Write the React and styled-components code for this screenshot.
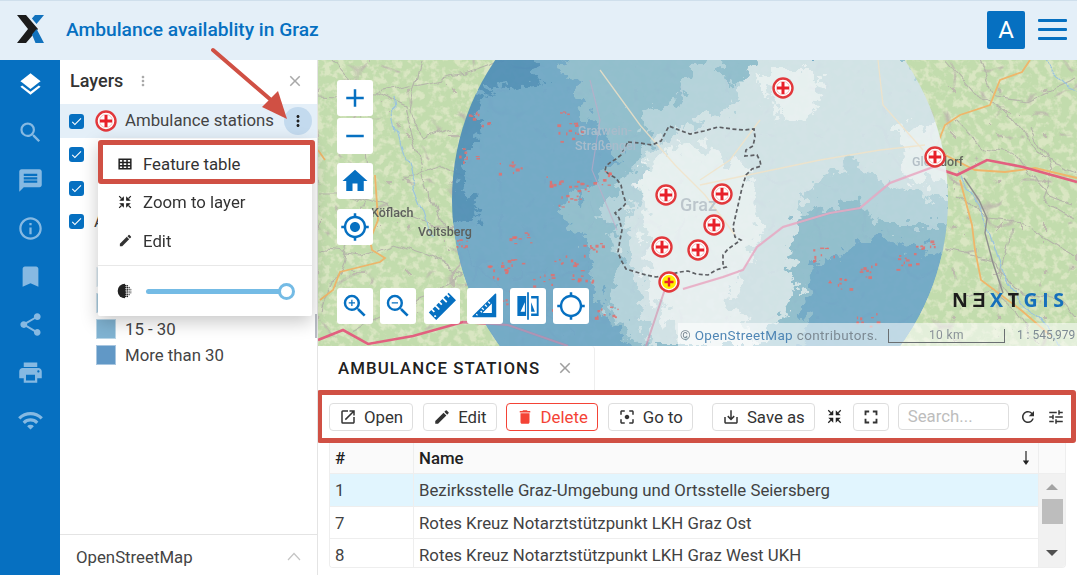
import React, { useMemo } from 'react';
import styled, { createGlobalStyle } from 'styled-components';
import {
  MdLayers, MdSearch, MdMessage, MdInfoOutline, MdBookmark, MdShare, MdPrint, MdWifi,
  MdClose, MdMoreVert, MdEdit, MdCheck, MdOpenInNew, MdDelete,
  MdFilterCenterFocus, MdSaveAlt, MdFullscreen, MdRefresh, MdTune,
  MdAdd, MdRemove, MdHome, MdMyLocation, MdZoomIn, MdZoomOut, MdLocationSearching,
} from 'react-icons/md';

const BLUE = '#0670c1';
const RED = '#d05044';

const GlobalStyle = createGlobalStyle`
  html, body { margin: 0; padding: 0; height: 100%; overflow: hidden; }
  body { font-family: Roboto, "Liberation Sans", sans-serif; color: #212121; background: #fff; }
  * { box-sizing: border-box; }
`;

const Page = styled.div`
  position: relative;
  width: 1077px;
  height: 575px;
  display: grid;
  grid-template-rows: 60px 1fr;
  overflow: hidden;
`;

const Header = styled.header`
  display: flex;
  align-items: center;
  padding: 0 10px 2px 17px;
  background: #e4eff8;
  border-top: 1px solid #cfdfec;
`;

const Title = styled.div`
  margin-left: 22px;
  font-size: 19.2px;
  font-weight: 500;
  color: ${BLUE};
  flex: 1;
`;

const Avatar = styled.div`
  width: 38px;
  height: 38px;
  background: ${BLUE};
  border-radius: 2px;
  color: #fff;
  font-size: 24px;
  display: flex;
  align-items: center;
  justify-content: center;
`;

const Burger = styled.div`
  width: 29px;
  margin-left: 13px;
  display: flex;
  flex-direction: column;
  gap: 6px;
  span { display: block; height: 3px; background: ${BLUE}; border-radius: 1px; }
`;

const Body = styled.div`
  display: flex;
  min-height: 0;
`;

const Sidebar = styled.nav`
  width: 60px;
  background: ${BLUE};
  display: flex;
  flex-direction: column;
`;

const SideItem = styled.div`
  height: 48px;
  display: flex;
  align-items: center;
  justify-content: center;
  color: ${p => (p.$active ? '#fff' : '#86b9e2')};
`;

const Panel = styled.aside`
  position: relative;
  width: 258px;
  border-right: 1px solid #e4e4e4;
  display: flex;
  flex-direction: column;
  background: #fff;
`;

const PanelHead = styled.div`
  height: 44px;
  display: flex;
  align-items: center;
  padding: 0 13px 3px 10px;
  font-size: 18px;
  font-weight: 500;
  color: #333;
  span { flex: 1; display: flex; align-items: center; gap: 12px; }
  svg { color: #a8a8a8; }
`;

const Tree = styled.div`
  flex: 1;
`;

const LayerRow = styled.div`
  height: ${p => (p.$first ? '34px' : '33.5px')};
  display: flex;
  align-items: center;
  padding: 0 5px 0 9px;
  font-size: 16.8px;
  color: #444;
  background: ${p => (p.$active ? '#e4eff8' : 'transparent')};
`;

const Check = styled.div`
  width: 15px;
  height: 15px;
  flex: none;
  border-radius: 3px;
  background: ${BLUE};
  color: #fff;
  display: flex;
  align-items: center;
  justify-content: center;
  margin-right: ${p => p.$gap || 11}px;
`;

const LayerName = styled.div`
  flex: 1;
  margin-left: ${p => p.$indent || 0}px;
  padding-bottom: 2px;
`;

const RoundBtn = styled.div`
  width: 28px;
  height: 28px;
  border-radius: 50%;
  background: #c3daee;
  display: flex;
  align-items: center;
  justify-content: center;
  color: #212121;
`;

const Legend = styled.div`
  padding: 28.5px 0 0 36px;
  display: flex;
  flex-direction: column;
  gap: 6px;
`;

const LegendRow = styled.div`
  display: flex;
  align-items: center;
  gap: 9px;
  font-size: 16.8px;
  color: #444;
  height: 20px;
`;

const Swatch = styled.div`
  width: 20px;
  height: 20px;
  background: ${p => p.$color};
  border: 1px solid rgba(255, 255, 255, 0.45);
`;

const PanelFoot = styled.div`
  height: 41px;
  border-top: 1px solid #e4e4e4;
  display: flex;
  align-items: center;
  justify-content: space-between;
  padding: 3px 16px 0 16px;
  font-size: 16.8px;
  color: #444;
`;

const ScrollSliver = styled.div`
  position: absolute;
  right: 0;
  top: 254px;
  width: 2px;
  height: 24px;
  background: #b8bcc4;
`;

const Menu = styled.div`
  position: absolute;
  left: 38px;
  top: 79px;
  width: 214px;
  height: 177px;
  background: #fff;
  box-shadow: 0 6px 18px rgba(0, 0, 0, 0.22);
  border-radius: 2px;
  z-index: 5;
`;

const MenuItem = styled.div`
  height: ${p => (p.$highlight ? '44px' : '39px')};
  display: flex;
  align-items: center;
  gap: 11px;
  padding-left: ${p => (p.$highlight ? '15px' : '20px')};
  font-size: 16.8px;
  color: #333;
  ${p => p.$highlight && `
    margin: 1px -3px -2px 0;
    padding-top: 3px;
    border: 5px solid ${RED};
    border-radius: 3px;
    background: #fff;
  `}
  svg.pen { margin-right: -1px; }
`;

const MenuDivider = styled.div`
  height: 1px;
  background: #e8e8e8;
  margin-top: 5px;
`;

const MenuSlider = styled.div`
  height: 50px;
  display: flex;
  align-items: center;
  gap: 13px;
  padding: 0 25px 0 19px;
`;

const Track = styled.div`
  position: relative;
  flex: 1;
  height: 5px;
  border-radius: 3px;
  background: #74bbe5;
`;

const Thumb = styled.div`
  position: absolute;
  right: -8px;
  top: -6px;
  width: 17px;
  height: 17px;
  border-radius: 50%;
  background: #fff;
  border: 3px solid #74bbe5;
`;

const Main = styled.main`
  flex: 1;
  min-width: 0;
  display: flex;
  flex-direction: column;
`;

const MapBox = styled.div`
  position: relative;
  height: 286px;
  overflow: hidden;
  background: #c8dfb4;
  svg.basemap { display: block; }
`;

const MapTools = styled.div`
  position: absolute;
  left: 19px;
  top: 20px;
  display: flex;
  flex-direction: column;
  gap: 2px;
`;

const MapBtn = styled.div`
  width: 36px;
  height: 36px;
  background: #fff;
  border-radius: 3px;
  color: ${BLUE};
  display: flex;
  align-items: center;
  justify-content: center;
  margin-top: ${p => p.$gap || 0}px;
  margin-left: ${p => p.$shift || 0}px;
`;

const MapBottomTools = styled.div`
  position: absolute;
  left: 19px;
  bottom: 22px;
  display: flex;
  gap: 7px;
`;

const Logo = styled.div`
  position: absolute;
  left: 634px;
  top: 230px;
  font-family: "Open Sans", sans-serif;
  font-size: 19.5px;
  line-height: 20px;
  font-weight: 700;
  letter-spacing: 4.6px;
  color: #1c1c1c;
  white-space: nowrap;
  span { color: #1670bb; }
`;

const Attribution = styled.div`
  position: absolute;
  right: 0;
  bottom: 0;
  left: 360px;
  height: 23px;
  background: rgba(255, 255, 255, 0.55);
  display: flex;
  align-items: center;
  font-size: 13.5px;
  color: #7d8a94;
  padding-left: 2px;
  white-space: nowrap;
  letter-spacing: 0.35px;
  b { font-weight: 400; color: #4f86b5; }
  em { font-style: normal; font-size: 12px; letter-spacing: 0; }
`;

const ScaleBar = styled.div`
  width: 117px;
  height: 14px;
  margin: 3px 12px 0 10px;
  border: 1px solid #6a6f72;
  border-top: none;
  font-size: 12px;
  line-height: 13px;
  text-align: center;
  color: #8a9299;
`;

const Bottom = styled.section`
  flex: 1;
  min-height: 0;
  background: #fff;
`;

const TabBar = styled.div`
  height: 44px;
  display: flex;
`;

const Tab = styled.div`
  width: 277px;
  border-right: 1px solid #eee;
  border-top-right-radius: 4px;
  display: flex;
  align-items: center;
  padding-left: 20px;
  gap: 16px;
  font-size: 16.8px;
  font-weight: 500;
  letter-spacing: 1.1px;
  color: #212121;
  svg { color: #9e9e9e; }
`;

const Toolbar = styled.div`
  height: 53px;
  margin-left: -1px;
  margin-right: 1px;
  border: 5px solid ${RED};
  border-radius: 3px;
  display: flex;
  align-items: center;
  padding-left: 7px;
`;

const ToolBtn = styled.div`
  height: 28px;
  display: flex;
  align-items: center;
  gap: 7px;
  padding: 0 ${p => (p.$square ? 6 : 9)}px;
  margin-right: ${p => p.$mr ?? 10}px;
  border: 1px solid ${p => (p.$danger ? '#f44336' : '#dedede')};
  border-radius: 4px;
  background: #fff;
  color: ${p => (p.$danger ? '#f44336' : '#333')};
  font-size: 16.8px;
  flex: none;
`;

const PlainIcon = styled.div`
  width: ${p => p.$w || 28}px;
  margin-right: ${p => p.$mr || 0}px;
  display: flex;
  justify-content: center;
  color: #333;
  flex: none;
`;

const SearchBox = styled.div`
  width: 111px;
  height: 27px;
  border: 1px solid #dedede;
  border-radius: 4px;
  margin: 0 5px 0 0;
  padding-left: 9px;
  font-size: 16.8px;
  line-height: 25px;
  color: #bdbdbd;
  flex: none;
`;

const Table = styled.div`
  margin: 0 11px;
  height: 125px;
  border: 1px solid #eee;
  border-top: none;
  border-radius: 0 0 4px 4px;
  display: flex;
  overflow: hidden;
`;

const Rows = styled.div`
  flex: 1;
  min-width: 0;
`;

const Row = styled.div`
  display: grid;
  grid-template-columns: 83px 1fr;
  height: ${p => p.$h}px;
  background: ${p => (p.$bg ? p.$bg : '#fff')};
  border-bottom: 1px solid #eee;
  font-size: 16.8px;
  font-weight: ${p => (p.$head ? 500 : 400)};
  color: ${p => (p.$head ? '#212121' : '#424242')};
`;

const Cell = styled.div`
  display: flex;
  align-items: center;
  justify-content: space-between;
  padding: 0 5px;
  & + & { border-left: 1px solid #eee; }
`;

const ScrollCol = styled.div`
  width: 27px;
  flex: none;
  display: flex;
  flex-direction: column;
  border-left: 1px solid #eee;
`;

const ScrollHead = styled.div`
  height: 31px;
  flex: none;
  background: #fafafa;
  border-bottom: 1px solid #eee;
`;

const ScrollTrack = styled.div`
  flex: 1;
  background: #f1f1f1;
  display: flex;
  flex-direction: column;
  align-items: center;
  padding-top: 10px;
`;

const ArrowUp = styled.div`
  width: 0;
  height: 0;
  border-left: 6px solid transparent;
  border-right: 6px solid transparent;
  border-bottom: 6px solid ${p => p.$color};
`;

const ArrowDown = styled.div`
  width: 0;
  height: 0;
  margin-top: 26px;
  border-left: 6px solid transparent;
  border-right: 6px solid transparent;
  border-top: 6px solid #505050;
`;

const ScrollThumb = styled.div`
  width: 21px;
  height: 25px;
  margin-top: 9px;
  background: #bdbdbd;
`;

const Annotation = styled.svg`
  position: absolute;
  left: 0;
  top: 0;
  z-index: 10;
  pointer-events: none;
`;

const LogoMark = () => (
  <svg width="27" height="29" viewBox="17 15 27 29">
    <path d="M17 15h9l12 14-12 14h-9l11-14z" fill="#1c1c1c" />
    <path d="M35 15h9l-7.500 9-4.600-5.400zM32 34.400l4.600-5.400L44 43h-8.500z" fill="#1272bd" />
  </svg>
);

const TableIcon = () => (
  <svg width="14" height="14" viewBox="0 0 24 24" fill="none" stroke="#222" strokeWidth="2.600">
    <path d="M2 4h20v16H2zM2 9.500h20M2 15h20M8.500 4v16M15.500 4v16" />
  </svg>
);

const ShrinkIcon = ({ size = 14 }) => (
  <svg width={size} height={size} viewBox="0 0 24 24" fill="#222" stroke="#222" strokeWidth="2">
    <path d="M9 9H4.500L9 4.500zM15 9h4.500L15 4.500zM9 15H4.500L9 19.500zM15 15h4.500L15 19.500z" />
    <path d="M2 2l4 4M22 2l-4 4M2 22l4-4M22 22l-4-4" fill="none" />
  </svg>
);

const OpacityIcon = () => {
  const dots = [];
  for (let x = 0; x < 4; x++) {
    for (let y = 0; y < 7; y++) {
      const dx = 13 + x * 2.600;
      const dy = 4 + y * 2.700;
      if ((dx - 12) ** 2 + (dy - 12) ** 2 < 100) dots.push(<circle key={`${x}-${y}`} cx={dx} cy={dy} r={1.250 - x * 0.140} fill="#222" />);
    }
  }
  return (
    <svg width="16" height="16" viewBox="0 0 24 24">
      <path d="M12 1a11 11 0 0 0 0 22z" fill="#222" />
      {dots}
    </svg>
  );
};

const SortArrow = () => (
  <svg width="14" height="16" viewBox="0 0 14 16" fill="#222">
    <path d="M6.400 1h1.200v11h-1.200z" />
    <path d="M3.800 10.500h6.400L7 15z" />
  </svg>
);

const Chevron = () => (
  <svg width="14" height="9" viewBox="0 0 14 9" fill="none" stroke="#c4c4c4" strokeWidth="1.200">
    <path d="M1 8l6-6.500L13 8" />
  </svg>
);

const RulerIcon = () => (
  <svg width="28" height="28" viewBox="0 0 24 24" fill={BLUE}>
    <g transform="rotate(-45 12 12)">
      <path fillRule="evenodd" d="M0 8h3v3h1.500V8h3v4.500H9V8h3v3h1.500V8h3v4.500H18V8h3v3h1.500V8H24v9H0zM2.500 14a.8.8 0 1 0 0 .01z" />
    </g>
  </svg>
);

const SetSquareIcon = () => (
  <svg width="30" height="30" viewBox="0 0 24 24" fill={BLUE}>
    <path fillRule="evenodd" d="M21 2.500V21H2.500q-1 0-.5-1L20 2.200q1-.6 1 .3zM17.500 10l-7.500 7.500h7.500z" />
    <path d="M6 19.500l-1-1M8.500 16l1 1" stroke="#fff" strokeWidth="1" />
    <path d="M12 11l1.500 1.500M14.500 8.500L16 10M9.500 13.500L11 15" stroke="#fff" strokeWidth="1.100" />
  </svg>
);

const CompareIcon = () => (
  <svg width="30" height="30" viewBox="0 0 24 24" fill={BLUE}>
    <path fillRule="evenodd" d="M3.500 4h7v16h-7zM9.500 9L6 16.500h3.500z" />
    <path d="M11.300 1h1.400v22h-1.400z" />
    <path d="M14.500 4h6v16h-6v-2h4.500V6h-4.500z" />
    <path d="M14.500 9l3 7.500h-3z" />
  </svg>
);

const Station = ({ x, y, hot }) => (
  <g transform={`translate(${x} ${y})`}>
    <circle r="9.500" fill="#fff" stroke="#e2383c" strokeWidth="2.400" />
    {hot ? <circle r="7" fill="#ffee00" /> : <circle r="6.500" fill="none" stroke="#f3b0b0" strokeWidth="0.800" />}
    <path d={hot ? 'M-1.200-4.500h2.400v3.300h3.300v2.400h-3.300v3.300h-2.400v-3.300h-3.300v-2.400h3.300z' : 'M-1.500-6h3v4.500h4.500v3h-4.500v4.500h-3v-4.500h-4.500v-3h4.500z'} fill="#e8202a" />
  </g>
);

const BOUNDARY = 'M628 142l12 1 12 2 9-4 8-15 10 4 11 4 14-3 14-4 14 2 12 1 10-1 1 8-2 9-7 4-1 6 12-1 3 6 1 5-9 3-6 6-4 13-3 13-3 13-3 13 2 10 6 3-13 9-5 6 0 9 3 3-10 3-8 5-12-1-8-3-8 1-12 3-12 2-10-2-10-3-10-3-5-9-3-8 2-12 2-10-3-12-4-5 8-6 3-4-3-9-2-9-5-7-6-3-5-4 1-5 5-4 5-3 5-4z';

const CLUSTERS = [
  [566, 118], [570, 135], [478, 118], [465, 155], [510, 168], [555, 180], [600, 178], [568, 200], [520, 238],
  [460, 240], [510, 262], [498, 272], [542, 280], [578, 185], [590, 250], [582, 275], [500, 300], [565, 262],
  [520, 295], [560, 305], [606, 310], [825, 253], [838, 282], [870, 270], [925, 247], [868, 320], [905, 262],
];

const useSpecks = () => useMemo(() => {
  let seed = 42;
  const rnd = () => {
    seed = (seed * 1664525 + 1013904223) % 4294967296;
    return seed / 4294967296;
  };
  const out = [];
  CLUSTERS.forEach(([cx, cy], i) => {
    for (let n = 0; n < 9; n++) {
      out.push({
        id: `${i}-${n}`,
        x: cx + (rnd() - 0.5) * 24,
        y: cy + (rnd() - 0.5) * 14,
        w: 1 + rnd() * 3,
        h: 1 + rnd() * 2,
      });
    }
  });
  return out;
}, []);

const GREY_ROADS = [
  'M318 92l55 3 30 14 14 45 10 40 15 35M372 95l95-20 40-15',
  'M318 195l35 0 30 10 50 20 25 10 18 30 40 30 60 40',
  'M330 60l22 25 10 45 8 60-15 30-12 40-20 50',
  'M318 250l45 5 30-12 30 10 40 18-30 25-45 15-40 20',
  'M400 180l40-15 30 15M420 60l-12 50 15 30 25-10',
  'M945 60l30 35 40 22 25 40 37 15M955 120l30 30 30 5 30 40 30 10',
  'M960 195l30 25 40 5 47 30M950 250l40 10 30 30 40 10 17 20',
  'M980 60l15 35 35 5 47-20M1010 230l-10 50 30 40',
  'M960 300l30-10 25 20 20 36M1030 130l20 40-10 30 37 20',
];

const Basemap = () => {
  const specks = useSpecks();
  return (
    <svg className="basemap" width="759" height="286" viewBox="318 60 759 286">
      <defs>
        <filter id="forest" x="0" y="0" width="100%" height="100%" colorInterpolationFilters="sRGB">
          <feTurbulence type="fractalNoise" baseFrequency="0.13" numOctaves="3" seed="7" />
          <feColorMatrix values="0 0 0 0 0.85  0 0 0 0 0.90  0 0 0 0 0.76  5 0 0 0 -2.300" />
          <feGaussianBlur stdDeviation="0.500" />
        </filter>
        <filter id="veins" x="0" y="0" width="100%" height="100%" colorInterpolationFilters="sRGB">
          <feTurbulence type="turbulence" baseFrequency="0.022" numOctaves="2" seed="5" />
          <feColorMatrix values="0 0 0 0 0.74  0 0 0 0 0.73  0 0 0 0 0.68  -16 0 0 0 1.100" />
          <feGaussianBlur stdDeviation="0.350" />
        </filter>
        <filter id="rough" x="-10%" y="-10%" width="120%" height="120%">
          <feTurbulence type="fractalNoise" baseFrequency="0.09" numOctaves="5" seed="11" result="n" />
          <feDisplacementMap in="SourceGraphic" in2="n" scale="34" xChannelSelector="R" yChannelSelector="G" />
          <feGaussianBlur stdDeviation="0.600" />
        </filter>
        <filter id="wobble" x="-5%" y="-5%" width="110%" height="110%">
          <feTurbulence type="fractalNoise" baseFrequency="0.035" numOctaves="3" seed="3" result="n" />
          <feDisplacementMap in="SourceGraphic" in2="n" scale="16" xChannelSelector="R" yChannelSelector="G" />
          <feGaussianBlur stdDeviation="0.300" />
        </filter>
        <filter id="soft"><feGaussianBlur stdDeviation="0.400" /></filter>
        <clipPath id="reach"><circle cx="700" cy="200" r="248" /></clipPath>
      </defs>

      <rect x="318" y="60" width="759" height="286" fill="#c2dcad" />
      <rect x="318" y="60" width="759" height="286" filter="url(#forest)" />
      <rect x="318" y="60" width="759" height="286" filter="url(#veins)" />

      <g fill="none" filter="url(#wobble)">
        {GREY_ROADS.map(d => <path key={d} d={d} stroke="#b5b5aa" strokeWidth="1.100" />)}
        <path d="M392 100l5 30 12 45 15 35 6 25" stroke="#9cc4dc" strokeWidth="1.200" />
        <path d="M960 170l30 60 15 45 25 35 30 36M1040 60l25 25 12 5" stroke="#9cc4dc" strokeWidth="1.300" />
      </g>
      <g fill="none" filter="url(#soft)">
        <path d="M318 150l7 10M375 175l3 45-8 20 2 10 13 8-5 4-40 10-7 18-13 10" stroke="#edb56a" strokeWidth="1.800" />
        <path d="M1030 60l-8 12-22 8-10 25-30 10-15 10-10 25M960 180l12 45 3 25 6 30 40 30 30 26M935 150l40 20 30 2 30-4 42 10" stroke="#efb66b" strokeWidth="1.800" />
        <path d="M964 178l15 22 8 18-2 15 8 30 10 30" stroke="#8f8f8f" strokeWidth="1.400" />
        <path d="M318 340l25-10 25 14 45-8 50-14 45 3 60 21" stroke="#e2607f" strokeWidth="2.600" />
        <path d="M1077 182l-54-15-36-7-30 15-24-8-43 16-30 25-30 5-47 14-26 20-14 23-20 7-40 12" stroke="#e2607f" strokeWidth="2.600" />
      </g>

      <g clipPath="url(#reach)" opacity="0.92">
        <circle cx="700" cy="200" r="248" fill="#6ea6c8" />
        <g filter="url(#rough)">
          <path d="M490 50h45l5 32-30 6-25-3-8 30 10 8-20 25-10 40 22 18 3 14-40 5-10-100z" fill="#4f8eb8" />
          <path d="M555 50h400v210l-80-25-65 35-10 86H640l-40-46-10-60-30-40 60-50-30-40z" fill="#8fbccf" />
          <path d="M700 50h20l10 40 40-30 180 0v165h-70l-20-25-70 15-20 75-50 40-80 16-30-36 10-60-20-40 50-70-10-30 40-10z" fill="#b3d2de" />
          <path d="M760 50h140l50 70v80l-50-10-50-30-50 40-10 60 10 30-40 56H650l-10-46-15-60 25-90 40-25 40-15z" fill="#d3e3ea" />
          <path d="M640 170l50-30 60 30 10 70-30 60 30 46h-80l-30-56zM756 72h66l-4 40-40 8zM900 128l55-5v62l-50-5z" fill="#eaf1f5" />
        </g>
      </g>

      <g fill="none" filter="url(#soft)">
        <path d="M945 160l-12 7-43 16-30 25-30 5-47 14-26 20-14 23-20 7-40 12" stroke="#e8a9c2" strokeWidth="2" opacity="0.85" />
        <path d="M463 322l45 3 60 21M646 346l20-60" stroke="#d58aa8" strokeWidth="2" opacity="0.6" />
        <path d="M600 70l40 55 35 40 30 30 30 40M878 60l5 45 40 45M760 120l-30 40-30 20M700 185l120-25 60-10 45-5" stroke="#f3e2c6" strokeWidth="1.300" opacity="0.8" />
        <path d="M590 80l10 40-8 50 25 60" stroke="#c8a6c6" strokeWidth="1.200" opacity="0.6" />
        <path d={BOUNDARY} stroke="#5d5f63" strokeWidth="1.700" strokeDasharray="4 2.500" />
      </g>

      <g clipPath="url(#reach)" fill="#e46f6c">
        {specks.map(s => <rect key={s.id} x={s.x} y={s.y} width={s.w} height={s.h} opacity="0.85" />)}
      </g>

      <g fontFamily="Roboto, sans-serif" fontWeight="500" fontSize="12.500">
        <text x="371" y="217" fill="#5c5f5c">Köflach</text>
        <text x="418" y="236" fill="#5c5f5c">Voitsberg</text>
        <text x="578" y="135" fill="#a9bccb">Gratwein-</text>
        <text x="575" y="150" fill="#a9bccb">Straßengel</text>
        <text x="680" y="211" fontSize="18" fill="#bcc6cc">Graz</text>
        <text x="912" y="166" fill="#b3bfc6">Glei<tspan fill="#66695f">sdorf</tspan></text>
      </g>

      <Station x={783} y={88} />
      <Station x={935} y={157} />
      <Station x={666} y={195} />
      <Station x={722} y={194} />
      <Station x={714} y={225} />
      <Station x={662} y={247} />
      <Station x={698} y={250} />
      <Station x={669} y={282} hot />
    </svg>
  );
};

const SIDE_ICONS = [MdLayers, MdSearch, MdMessage, MdInfoOutline, MdBookmark, MdShare, MdPrint, MdWifi];

const App = () => (
  <Page>
    <GlobalStyle />
    <Header>
      <LogoMark />
      <Title>Ambulance availablity in Graz</Title>
      <Avatar>A</Avatar>
      <Burger><span /><span /><span /></Burger>
    </Header>

    <Body>
      <Sidebar>
        {SIDE_ICONS.map((Icon, i) => (
          <SideItem key={i} $active={i === 0}><Icon size={27} /></SideItem>
        ))}
      </Sidebar>

      <Panel>
        <PanelHead>
          <span>Layers <MdMoreVert size={16} /></span>
          <MdClose size={18} />
        </PanelHead>
        <Tree>
          <LayerRow $first $active>
            <Check><MdCheck size={13} /></Check>
            <svg width="22" height="22" viewBox="-11 -11 22 22"><Station x={0} y={0} /></svg>
            <LayerName $indent={8}>Ambulance stations</LayerName>
            <RoundBtn><MdMoreVert size={18} /></RoundBtn>
          </LayerRow>
          <LayerRow><Check><MdCheck size={13} /></Check></LayerRow>
          <LayerRow><Check><MdCheck size={13} /></Check></LayerRow>
          <LayerRow><Check $gap={10}><MdCheck size={13} /></Check><LayerName>A</LayerName></LayerRow>
          <Legend>
            <LegendRow><Swatch $color="#d7e6ef" /></LegendRow>
            <LegendRow><Swatch $color="#a9cbde" /></LegendRow>
            <LegendRow><Swatch $color="#80b3d2" />15 - 30</LegendRow>
            <LegendRow><Swatch $color="#6198c6" />More than 30</LegendRow>
          </Legend>
        </Tree>
        <PanelFoot>OpenStreetMap <Chevron /></PanelFoot>
        <ScrollSliver />
        <Menu>
          <MenuItem $highlight><TableIcon />Feature table</MenuItem>
          <MenuItem><ShrinkIcon size={14} />Zoom to layer</MenuItem>
          <MenuItem><MdEdit className="pen" size={15} />Edit</MenuItem>
          <MenuDivider />
          <MenuSlider>
            <OpacityIcon />
            <Track><Thumb /></Track>
          </MenuSlider>
        </Menu>
      </Panel>

      <Main>
        <MapBox>
          <Basemap />
          <MapTools>
            <MapBtn><MdAdd size={30} /></MapBtn>
            <MapBtn><MdRemove size={30} /></MapBtn>
            <MapBtn $gap={7}><MdHome size={30} /></MapBtn>
            <MapBtn $gap={8}><MdMyLocation size={30} /></MapBtn>
          </MapTools>
          <MapBottomTools>
            <MapBtn><MdZoomIn size={30} /></MapBtn>
            <MapBtn><MdZoomOut size={30} /></MapBtn>
            <MapBtn $shift={1}><RulerIcon /></MapBtn>
            <MapBtn><SetSquareIcon /></MapBtn>
            <MapBtn><CompareIcon /></MapBtn>
            <MapBtn><MdLocationSearching size={30} /></MapBtn>
          </MapBottomTools>
          <Logo>NƎ<span>X</span>T<span>GIS</span></Logo>
          <Attribution>
            © <b>&nbsp;OpenStreetMap</b>&nbsp;contributors.
            <ScaleBar>10 km</ScaleBar>
            <em>1 : 545,979</em>
          </Attribution>
        </MapBox>

        <Bottom>
          <TabBar>
            <Tab>AMBULANCE STATIONS <MdClose size={18} /></Tab>
          </TabBar>
          <Toolbar>
            <ToolBtn><MdOpenInNew size={18} />Open</ToolBtn>
            <ToolBtn $mr={9}><MdEdit size={18} />Edit</ToolBtn>
            <ToolBtn $danger><MdDelete size={18} />Delete</ToolBtn>
            <ToolBtn $mr={19}><MdFilterCenterFocus size={18} />Go to</ToolBtn>
            <ToolBtn $mr={6}><MdSaveAlt size={18} />Save as</ToolBtn>
            <PlainIcon $w={27} $mr={5}><ShrinkIcon size={15} /></PlainIcon>
            <ToolBtn $square $mr={9}><MdFullscreen size={22} /></ToolBtn>
            <SearchBox>Search...</SearchBox>
            <PlainIcon $w={28}><MdRefresh size={18} /></PlainIcon>
            <PlainIcon $w={28}><MdTune size={18} /></PlainIcon>
          </Toolbar>
          <Table>
            <Rows>
              <Row $head $h={31} $bg="#fafafa">
                <Cell>#</Cell>
                <Cell>Name <SortArrow /></Cell>
              </Row>
              <Row $h={33} $bg="#e1f5fe">
                <Cell>1</Cell>
                <Cell>Bezirksstelle Graz-Umgebung und Ortsstelle Seiersberg</Cell>
              </Row>
              <Row $h={32}>
                <Cell>7</Cell>
                <Cell>Rotes Kreuz Notarztstützpunkt LKH Graz Ost</Cell>
              </Row>
              <Row $h={33}>
                <Cell>8</Cell>
                <Cell>Rotes Kreuz Notarztstützpunkt LKH Graz West UKH</Cell>
              </Row>
            </Rows>
            <ScrollCol>
              <ScrollHead />
              <ScrollTrack>
                <ArrowUp $color="#a3a3a3" />
                <ScrollThumb />
                <ArrowDown />
              </ScrollTrack>
            </ScrollCol>
          </Table>
        </Bottom>
      </Main>
    </Body>

    <Annotation width="1077" height="575" viewBox="0 0 1077 575">
      <path d="M213 50l58 50" stroke={RED} strokeWidth="4" strokeLinecap="round" />
      <path d="M287 119l-25-12 16-16z" fill={RED} />
    </Annotation>
  </Page>
);

export default App;
